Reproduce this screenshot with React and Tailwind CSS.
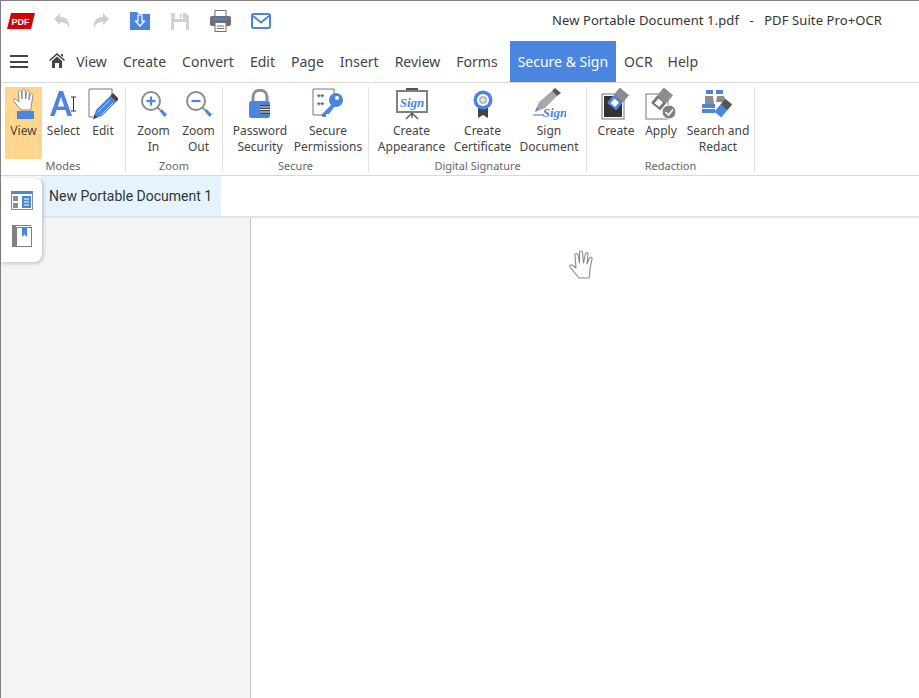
import React from 'react';

const uiFont = { };

const menuItems = [
  { label: 'View', cls: 'w-[41px]' },
  { label: 'Create', cls: 'w-[59px]' },
  { label: 'Convert', cls: 'w-[62px]' },
  { label: 'Edit', cls: 'w-[29px]' },
  { label: 'Page', cls: 'w-[46px]' },
  { label: 'Insert', cls: 'w-[48px]' },
  { label: 'Review', cls: 'w-[52px]' },
  { label: 'Forms', cls: 'w-[52px]' },
];

const HandIcon = ({ className }) => (
  <svg viewBox="0 0 26 32" className={className}>
    <path d="M10 22 L3 13.5 C1.5 11.5 3.5 10 5.5 11.5 L8 14 L7.5 4 C7.5 2 10.2 2 10.4 4 L11 11 L11.3 2.5 C11.4 .5 14 .5 14.2 2.5 L14.6 11 L15.8 3.5 C16.2 1.6 18.6 2 18.4 4 L17.8 12 L19.6 6.5 C20.2 4.8 22.4 5.4 22 7.4 L20.6 16 C20.2 19 20 20 20 22 Z" fill="#fff" stroke="#8c8c8c" strokeWidth="1" strokeLinejoin="round" />
    <rect x="6" y="23" width="17" height="8" fill="#4a86e0" />
  </svg>
);

const Tool = ({ lines, width, icon, active }) => (
  <div className={`flex flex-col items-center shrink-0 pt-[1px] h-[72px] ${width} ${active ? 'bg-[#ffd78c]' : ''}`}>
    <div className="h-[32px] w-full flex items-center justify-center">{icon}</div>
    <div className="text-[12px] leading-[16px] text-[#444] text-center mt-[3px] whitespace-nowrap">
      {lines.map((l) => <div key={l}>{l}</div>)}
    </div>
  </div>
);

const Group = ({ label, width, children, pl }) => (
  <div className={`flex flex-col shrink-0 h-[85px] border-r border-[#e0e0e0] ${width}`}>
    <div className={`flex h-[72px] ${pl}`}>{children}</div>
    <div className="text-[11px] leading-[13px] text-[#666] text-center">{label}</div>
  </div>
);

const Magnifier = ({ minus }) => (
  <svg viewBox="0 0 28 28" className="w-[28px] h-[28px]">
    <circle cx="11" cy="11" r="9" fill="#fff" stroke="#8c8c8c" strokeWidth="2" />
    <path d="M6.5 11 H15.5" stroke="#4a86e0" strokeWidth="2.2" />
    {!minus && <path d="M11 6.5 V15.5" stroke="#4a86e0" strokeWidth="2.2" />}
    <path d="M17.5 17.5 L20 20" stroke="#8c8c8c" strokeWidth="2" />
    <path d="M19.5 21 L21.5 19 L27 24.5 L24.5 27 Z" fill="#4a86e0" />
  </svg>
);

const Eraser = ({ gray }) => (
  <g transform="rotate(40 17 11)">
    <rect x="11" y="1" width="12" height="10" fill={gray ? '#8c8c8c' : '#8c8c8c'} />
    <rect x="11" y="11" width="12" height="10" rx="1" fill={gray ? '#777' : '#4a86e0'} />
    <rect x="14" y="13" width="6" height="6" fill="#fff" />
  </g>
);

export default function App() {
  return (
    <div className="h-screen w-full overflow-hidden bg-white flex flex-col border-l border-t border-[#808080] font-['Noto_Sans',sans-serif]">
      {/* title bar */}
      <div className="h-[40px] flex items-center shrink-0 pl-[6px] pr-[37px]">
        <svg viewBox="0 0 28 16" className="w-[28px] h-[16px]">
          <path d="M4 0 H28 L24 16 H0 Z" fill="#d40000" />
          <text x="13.5" y="11.5" textAnchor="middle" fontSize="9" fontWeight="700" fill="#fff" fontFamily="Liberation Sans">PDF</text>
        </svg>
        <svg viewBox="0 0 16 17" className="w-[16px] h-[17px] ml-[19px]">
          <path d="M0 6 L6 0 V4 C12 4 16 7 15 16 C14 11 11 9 6 9 V12 Z" fill="#cfcfcf" />
        </svg>
        <svg viewBox="0 0 16 17" className="w-[16px] h-[17px] ml-[23px] -scale-x-100">
          <path d="M0 6 L6 0 V4 C12 4 16 7 15 16 C14 11 11 9 6 9 V12 Z" fill="#cfcfcf" />
        </svg>
        <svg viewBox="0 0 20 18" className="w-[20px] h-[18px] ml-[21px]">
          <path d="M0 0 H7 L9 2 H20 V18 H0 Z" fill="#4a86e0" />
          <path d="M8 3 H12 V9 H14.5 L10 14 L5.5 9 H8 Z" fill="#4a86e0" stroke="#fff" strokeWidth="1.2" />
        </svg>
        <svg viewBox="0 0 18 17" className="w-[18px] h-[17px] ml-[21px]">
          <path d="M0 0 H15 L18 3 V17 H0 Z" fill="#d2d2d2" />
          <rect x="4" y="0" width="8" height="6" fill="#fff" />
          <rect x="9" y="1" width="2" height="4" fill="#d2d2d2" />
          <rect x="3" y="9" width="12" height="8" fill="#fff" />
        </svg>
        <svg viewBox="0 0 21 22" className="w-[21px] h-[22px] ml-[21px]">
          <rect x="5" y="0.5" width="11" height="7" fill="#fff" stroke="#707070" />
          <rect x="0" y="6" width="21" height="10" rx="2" fill="#707070" />
          <rect x="4" y="8" width="13" height="2" fill="#4a86e0" />
          <rect x="5" y="12.5" width="11" height="9" fill="#fff" stroke="#707070" />
          <path d="M7 16 H14 M7 18.5 H14" stroke="#707070" />
        </svg>
        <svg viewBox="0 0 20 16" className="w-[20px] h-[16px] ml-[20px]">
          <rect x="1" y="1" width="18" height="14" rx="1.5" fill="#fff" stroke="#4a86e0" strokeWidth="2" />
          <path d="M2 3 L10 9.5 L18 3" fill="none" stroke="#4a86e0" strokeWidth="2" />
        </svg>
        <div className="ml-auto text-[13px] text-[#333] whitespace-pre tracking-[0.1px]">New Portable Document 1.pdf   -   PDF Suite Pro+OCR</div>
      </div>

      {/* menu bar */}
      <div className="h-[42px] flex items-center shrink-0 border-b border-[#d9d9d9] text-[14px] text-[#444]">
        <div className="w-[18px] ml-[9px] flex flex-col gap-[3.5px]">
          <div className="h-[2px] bg-[#444]" />
          <div className="h-[2px] bg-[#444]" />
          <div className="h-[2px] bg-[#444]" />
        </div>
        <svg viewBox="0 0 16 15" className="w-[16px] h-[15px] ml-[21px] mb-[3px]">
          <path d="M8 0 L16 7 L15 8 L8 2 L1 8 L0 7 Z M3 8 L8 3.5 L13 8 V15 H10 V10 H6 V15 H3 Z M12 1 H14 V4 L12 2.5 Z" fill="#444" />
        </svg>
        <div className="flex items-center ml-[8px] h-full">
          <div className="w-[33px] text-center mx-[2px]">View</div>
        </div>
        <div className="ml-[13px] whitespace-nowrap">Create</div>
        <div className="ml-[16px] whitespace-nowrap">Convert</div>
        <div className="ml-[16px] whitespace-nowrap">Edit</div>
        <div className="ml-[16px] whitespace-nowrap">Page</div>
        <div className="ml-[16px] whitespace-nowrap">Insert</div>
        <div className="ml-[16px] whitespace-nowrap">Review</div>
        <div className="ml-[16px] whitespace-nowrap">Forms</div>
        <div className="ml-[12px] h-full bg-[#4a86e0] text-white flex items-center px-[8px] whitespace-nowrap">Secure &amp; Sign</div>
        <div className="ml-[8px] whitespace-nowrap">OCR</div>
        <div className="ml-[15px] whitespace-nowrap">Help</div>
      </div>

      {/* ribbon */}
      <div className="h-[93px] shrink-0 flex pt-[4px] border-b border-[#d9d9d9]">
        <Group label="Modes" width="w-[125px]" pl="pl-[4px]">
          <Tool active lines={['View']} width="w-[37px]" icon={<HandIcon className="w-[26px] h-[32px]" />} />
          <Tool lines={['Select']} width="w-[43px]" icon={
            <svg viewBox="0 0 28 30" className="w-[28px] h-[30px]">
              <path d="M0 27 L9 2 H13 L22 27 H17.5 L15.4 21 H6.6 L4.5 27 Z M7.8 17.5 H14.2 L11 8 Z" fill="#4a86e0" />
              <path d="M21 8 H26 M23.5 8 V22 M21 22 H26" stroke="#333" strokeWidth="1" fill="none" />
            </svg>
          } />
          <Tool lines={['Edit']} width="w-[36px]" icon={
            <svg viewBox="0 0 30 32" className="w-[30px] h-[32px]">
              <path d="M5 29 H1 V1 H24 V8" fill="none" stroke="#777" />
              <path d="M5 31 L8 22 L22 8 L28 14 L14 28 Z" fill="#4a86e0" />
              <path d="M22 8 L25 5 L31 11 L28 14 Z" fill="#444" />
              <path d="M5 31 L6.5 26.5 L9.5 29.5 Z" fill="#444" />
              <path d="M10 24 L22 12 M13 27 L25 15" stroke="#bcd3f5" />
            </svg>
          } />
        </Group>
        <Group label="Zoom" width="w-[97px]" pl="pl-[5px]">
          <Tool lines={['Zoom', 'In']} width="w-[45px]" icon={<Magnifier />} />
          <Tool lines={['Zoom', 'Out']} width="w-[45px]" icon={<Magnifier minus />} />
        </Group>
        <Group label="Secure" width="w-[146px]" pl="pl-[2px]">
          <Tool lines={['Password', 'Security']} width="w-[70px]" icon={
            <svg viewBox="0 0 22 30" className="w-[22px] h-[30px]">
              <path d="M4 13 V8 C4 -1 18 -1 18 8 V13" fill="none" stroke="#8c8c8c" strokeWidth="3" />
              <rect x="0" y="12" width="21" height="17" rx="2.5" fill="#4a86e0" />
              <rect x="11" y="16" width="10" height="9" fill="#444" />
              <path d="M11 18 H21 M11 20.5 H21 M11 23 H21" stroke="#fff" strokeWidth="0.9" />
            </svg>
          } />
          <Tool lines={['Secure', 'Permissions']} width="w-[66px]" icon={
            <svg viewBox="0 0 32 32" className="w-[32px] h-[32px]">
              <path d="M22 10 V1 H1 V27 H10" fill="#fff" stroke="#777" />
              <text x="5" y="12" fontSize="9" fontWeight="700" fill="#666" fontFamily="Liberation Sans">**</text>
              <text x="5" y="20" fontSize="9" fontWeight="700" fill="#666" fontFamily="Liberation Sans">**</text>
              <circle cx="24" cy="12" r="7" fill="#4a86e0" />
              <circle cx="25" cy="10" r="2" fill="#fff" />
              <path d="M20 16 L9 27 L11 29 L14 29 L14 26 L17 26 L23 18 Z" fill="#4a86e0" />
            </svg>
          } />
        </Group>
        <Group label="Digital Signature" width="w-[218px]" pl="pl-[7px]">
          <Tool lines={['Create', 'Appearance']} width="w-[71px]" icon={
            <svg viewBox="0 0 32 32" className="w-[32px] h-[32px]">
              <rect x="10" y="0" width="12" height="2" fill="#555" />
              <rect x="1" y="3" width="30" height="21" fill="#fff" stroke="#808080" strokeWidth="2" />
              <text x="16" y="19" textAnchor="middle" fontSize="13" fontWeight="700" fontStyle="italic" fill="#4a86e0" fontFamily="Liberation Serif">Sign</text>
              <path d="M16 25 L10 31 M16 25 L22 31 M16 25 V30" stroke="#555" strokeWidth="1.4" />
            </svg>
          } />
          <Tool lines={['Create', 'Certificate']} width="w-[71px]" icon={
            <svg viewBox="0 0 22 30" className="w-[22px] h-[30px]">
              <path d="M6 17 V29 L11 26 L16 29 V17 Z" fill="#444" />
              <circle cx="11" cy="11" r="9.5" fill="#4a86e0" />
              <circle cx="11" cy="11" r="6" fill="#fff" />
              <circle cx="11" cy="11" r="4" fill="#b8b8b8" />
              <path d="M8.5 11 H13.5 M11 8.5 V13.5" stroke="#fff" strokeWidth="1.2" />
            </svg>
          } />
          <Tool lines={['Sign', 'Document']} width="w-[62px]" icon={
            <svg viewBox="0 0 34 32" className="w-[34px] h-[32px]">
              <path d="M3 24 L7 14 L20 3 L25 8 L13 20 Z" fill="#a8a8a8" />
              <path d="M20 3 L23 0 L29 5 L25 8 Z" fill="#555" />
              <path d="M1 27 H12" stroke="#4a86e0" strokeWidth="1.2" />
              <path d="M3 24 L7 21 L5 19 Z" fill="#4a86e0" />
              <text x="23" y="29" textAnchor="middle" fontSize="13" fontWeight="700" fontStyle="italic" fill="#4a86e0" fontFamily="Liberation Serif">Sign</text>
            </svg>
          } />
        </Group>
        <Group label="Redaction" width="w-[168px]" pl="pl-[5px]">
          <Tool lines={['Create']} width="w-[48px]" icon={
            <svg viewBox="0 0 30 32" className="w-[30px] h-[32px]">
              <rect x="1" y="6" width="22" height="25" fill="#fff" stroke="#777" />
              <rect x="3" y="8" width="18" height="21" fill="#333" />
              <Eraser />
            </svg>
          } />
          <Tool lines={['Apply']} width="w-[42px]" icon={
            <svg viewBox="0 0 32 32" className="w-[32px] h-[32px]">
              <rect x="1" y="6" width="22" height="25" fill="#fff" stroke="#777" />
              <Eraser gray />
              <circle cx="24" cy="24" r="7" fill="#808080" stroke="#fff" />
              <path d="M20.5 24 L23.5 27 L28 21.5" fill="none" stroke="#fff" strokeWidth="1.6" />
            </svg>
          } />
          <Tool lines={['Search and', 'Redact']} width="w-[72px]" icon={
            <svg viewBox="0 0 32 32" className="w-[32px] h-[32px]">
              <rect x="4" y="2" width="7" height="4" fill="#4a86e0" />
              <rect x="14" y="2" width="7" height="4" fill="#4a86e0" />
              <path d="M3 8 H11 L12 16 H3 Z M15 8 H22 L24 14 H14 Z" fill="#8c8c8c" />
              <rect x="0" y="16" width="13" height="4" fill="#4a86e0" />
              <rect x="0" y="21" width="13" height="4" fill="#4a86e0" />
              <g transform="rotate(40 22 20)">
                <rect x="17" y="12" width="9" height="8" fill="#555" />
                <rect x="17" y="20" width="9" height="9" fill="#4a86e0" />
              </g>
            </svg>
          } />
        </Group>
      </div>

      {/* document tab row */}
      <div className="h-[42px] shrink-0 flex border-b-2 border-[#e3e3e3] pl-[40px]">
        <div className="w-[180px] bg-[#e5f3fe] flex items-center pl-[8px] text-[14px] text-[#333] font-['Roboto',sans-serif] whitespace-nowrap">New Portable Document 1</div>
      </div>

      {/* body */}
      <div className="flex-1 flex min-h-0">
        <div className="w-[250px] bg-[#f4f4f4] border-r border-[#c4c4c4]" />
        <div className="flex-1 bg-white" />
      </div>

      {/* side tools pill */}
      <div className="absolute left-[1px] top-[178px] w-[41px] h-[84px] bg-white rounded-r-[8px] shadow-[1px_1px_4px_rgba(0,0,0,0.25)] flex flex-col items-center pt-[13px] gap-[15px]">
        <svg viewBox="0 0 22 19" className="w-[22px] h-[19px]">
          <rect x="0.5" y="0.5" width="21" height="18" fill="#fff" stroke="#8c8c8c" />
          <rect x="0" y="0" width="22" height="3" fill="#4a86e0" />
          <rect x="2" y="5" width="5" height="5" fill="#8c8c8c" />
          <rect x="2" y="12" width="5" height="5" fill="#8c8c8c" />
          <rect x="11" y="5" width="9" height="12" fill="#4a86e0" />
          <path d="M13 8 H18 M13 11 H18 M13 14 H18" stroke="#fff" />
        </svg>
        <svg viewBox="0 0 20 22" className="w-[20px] h-[22px]">
          <rect x="0" y="0" width="4" height="22" fill="#808080" />
          <path d="M4 .5 H18.5 V2" fill="none" stroke="#808080" />
          <rect x="4.5" y="2.5" width="15" height="19" fill="#fff" stroke="#808080" />
          <path d="M10 2 H15 V12 L12.5 9.5 L10 12 Z" fill="#4a86e0" />
        </svg>
      </div>

      {/* hand cursor over the page */}
      <svg viewBox="0 0 28 32" className="absolute left-[568px] top-[249px] w-[28px] h-[32px]">
        <path d="M11 29 C8 25 5 22 2 18 C1 16 3 15 5 16.5 L8 19 L7 6 C7 4 9.5 4 10 6 L11.5 14 L11.5 3.5 C11.5 1.5 14.5 1.5 14.5 3.5 L15.5 14 L17.5 5 C18 3 20.5 3.5 20 5.5 L19 15 L21.5 9 C22.5 7.5 24.5 8.5 24 10 L22 20 C21.5 24 22 26 21 29 Z" fill="#fff" stroke="#8a8a8a" strokeWidth="1.1" strokeLinejoin="round" />
      </svg>
    </div>
  );
}
